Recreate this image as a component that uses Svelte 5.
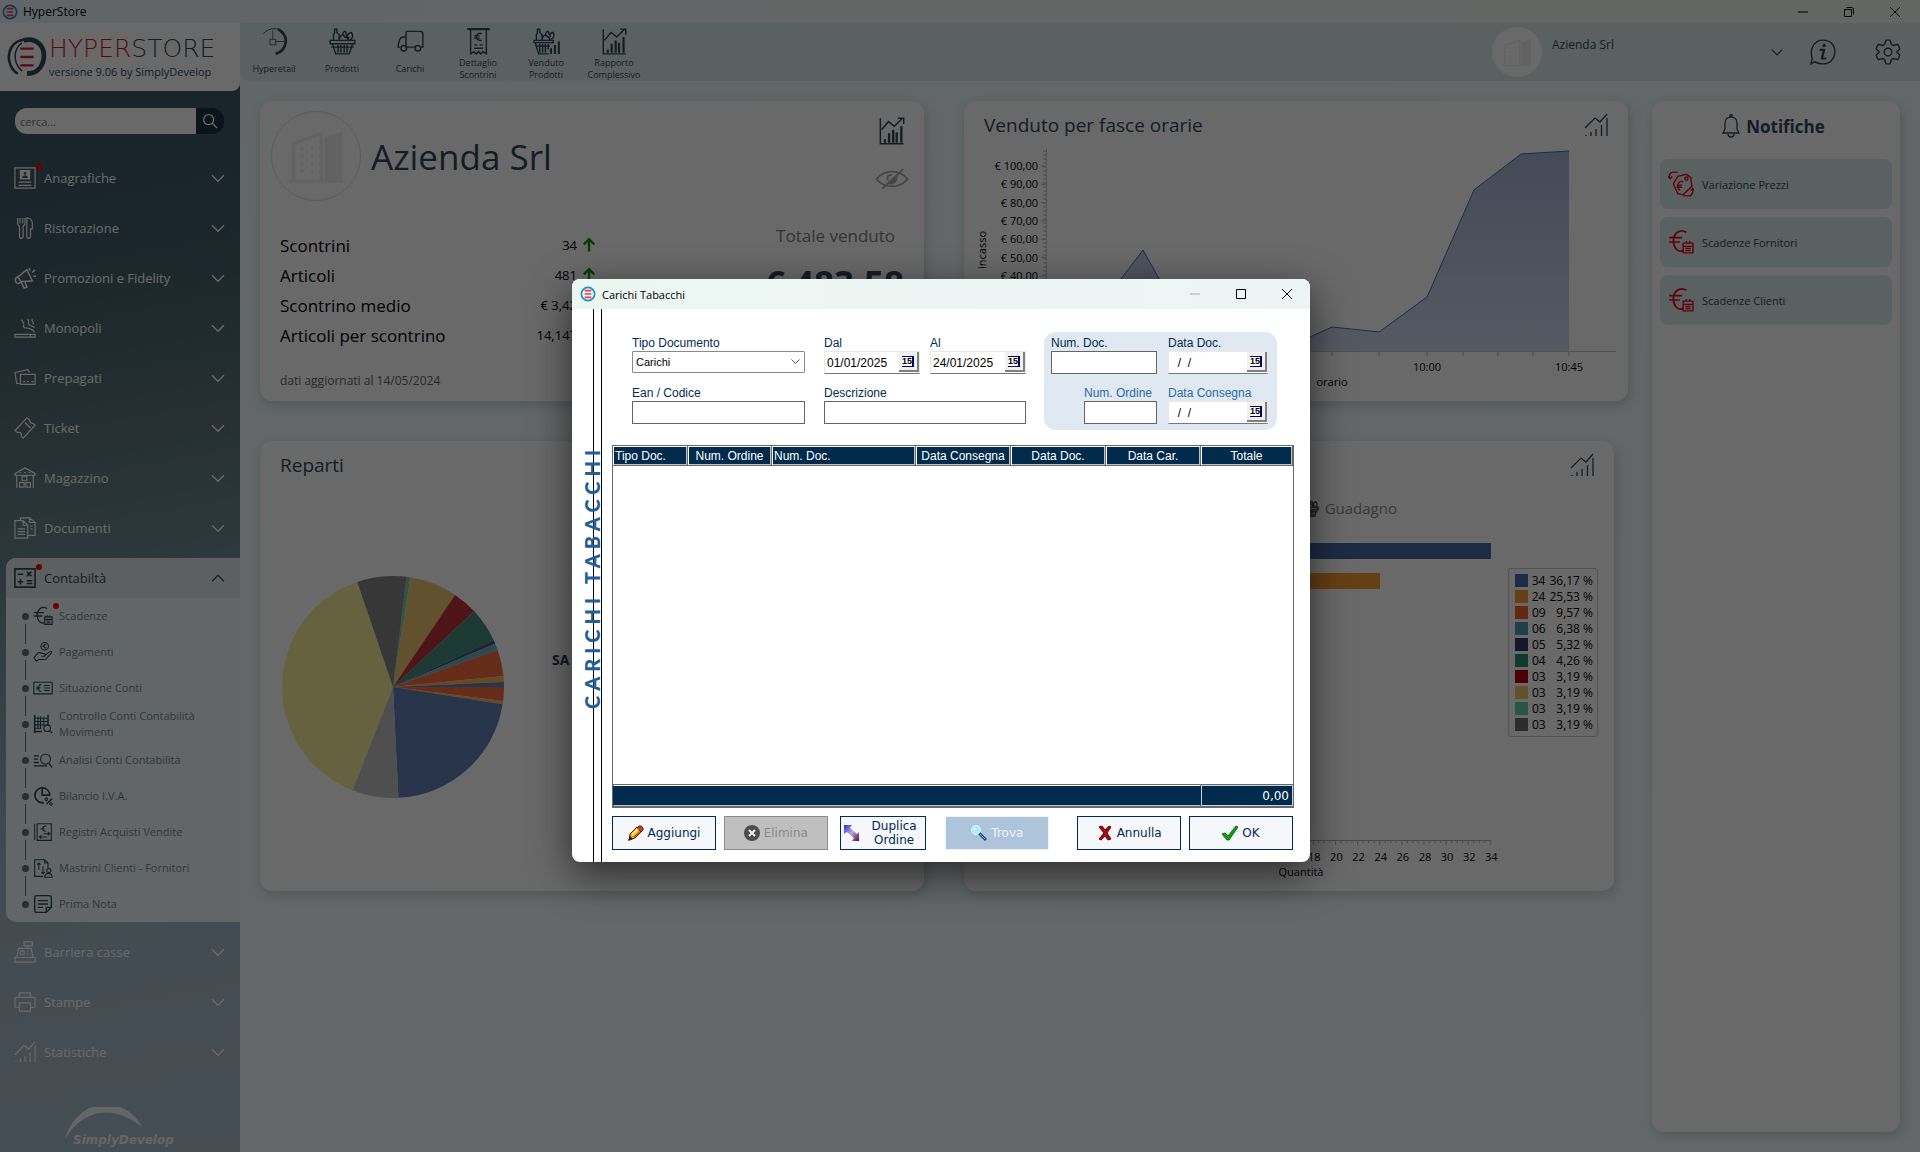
<script>
  const icons = {
    ring: `<path d="M11 1.500C3 2 0 9 1.500 15c1 4 3 6 5 7" stroke="#2f4a57" stroke-width="1.600"/><path d="M9 3.500C4 7 3 15 9 20.500" stroke="#2f4a57" stroke-width=".9"/><path d="M10 2c8-2 13 4 12 11-1 6-5 9-10 9" stroke="#2f4a57" stroke-width="2.800"/><path d="M8 7h8M8 12h8M8 17h8" stroke="#e0142c" stroke-width="1.400"/>`,
    appMark: `<circle cx="12" cy="12" r="10" stroke="#1f8fc8" stroke-width="2.600"/><path d="M7 7h10M7 12h10M7 17h10" stroke="#e8404f" stroke-width="2.600"/>`,
    search: `<circle cx="10" cy="10" r="7.500"/><path d="M15.500 15.500l7 7"/>`,
    down: `<path d="M3 8l9 9 9-9"/>`,
    up: `<path d="M3 17l9-9 9 9"/>`,
    anagrafiche: `<path d="M1 1h22v22H1z"/><path d="M7 4h10v9H7z" fill="currentColor"/><circle cx="12" cy="7" r="1.500" fill="#3f5a64" stroke="none"/><path d="M9 12c0-4 6-4 6 0z" fill="#3f5a64" stroke="none"/><path d="M5 16.500h14M5 20h14"/>`,
    ristorazione: `<path d="M4 1v6c0 2 1 2 2 3v11c0 3 4 3 4 0V10c1-1 2-1 2-3V1M6.500 1v6M9.500 1v6M14 1v20c0 3 4 3 4 0v-8h2V7c0-4-3-6-6-6z"/>`,
    promozioni: `<path d="M4 11L14 3l6 12-12 1zM4 11c-4 1-3 7 1 7l3-2M8 17l3 6 3-1-2-6M17 4V1M20 6l3-3M21 10h3" stroke-width="1.600"/>`,
    monopoli: `<path d="M1 19h22v3H1zM18 19v3M22 17c0-3-2-3-4-4s-3-1-5-1-4-2-2-4M22 12c-1-3-5-2-6-4s1-3-1-6M8 3c2 2 1 3 3 4M21 8c1-3-3-3-1-6"/>`,
    prepagati: `<path d="M7 8h16v11H7zM1 6l14-3 2 3M1 6l2 12h3M10 16h2M14 16h2M19 16h2"/>`,
    ticket: `<path d="M1 15L14 1l3 2c0 2 1 4 4 4l2 2L10 23l-2-2c1-3-1-5-4-4zM12 6l6 6"/>`,
    magazzino: `<path d="M1 7l11-6 11 6v2H1zM3 9v14M21 9v14M9 10h5v5H9zM6 17h5v5H6zM13 17h5v5h-5zM6 6h2M11 6h2M16 6h2"/>`,
    documenti: `<path d="M1 4h9l5 5v14H1zM10 4v5h5M7 4V1h10l6 5v14h-8M17 1v5h6M4 13h8M4 16h8M4 19h8M18 10h2M18 13h2"/>`,
    contabilita: `<path d="M1 2h22v20H1z" stroke-width="1.800"/><path d="M4 8h6M14 5l5 5M19 5l-5 5M7 13v6M4 16h6M14 15h6M14 18h6" stroke-width="1.700"/>`,
    cassa: `<path d="M1 18h22v5H1zM3 18L5 8h14l2 10M11 1h9v4h-9zM15 5v3M7 11h4v4H7zM14 11h2M18 11h1M14 14h2M18 14h1"/>`,
    stampe: `<path d="M6 7V2h12v5M6 18H3c-2 0-2-1-2-2V9c0-2 1-2 2-2h18c2 0 2 1 2 2v7c0 2-1 2-2 2h-3M6 13h12v9H6z"/>`,
    trend: `<path d="M1 15L11 5l5 4 7-8M2 23v-1M7 23v-4M12 23v-7M17.500 23V12M23 23V5"/>`,
    report: `<path d="M2 1v22h20M3 11l6-7 5 4 7-7M17 1h5v5"/><path d="M6 22v-3M9.500 22v-8M13 22V11M16 22v-9M20 22V8" stroke-width="2"/>`,
    euroCal: `<path d="M17 3C10-1 5 5 5 11s4 11 9 9M1 8h12M1 12h10" stroke-width="1.600"/><path d="M14 13h9v9h-9zM14 16h9M17 11v2M20 11v2M16 18h5M16 20h5"/>`,
    pagamenti: `<circle cx="14" cy="5" r="4.500"/><path d="M16 3c-4-1-4 5 0 4M11 5h3M1 19l5-6c3-1 5 1 8 1 2 1 1 3-1 3h-3M14 16l7-5c2 0 2 1 1 2l-7 8H7l-3 2-3-4"/>`,
    conti: `<path d="M1 5h22v14H1z"/><path d="M10 8c-5-1-5 9 0 8M4 11h5M4 13h4M13 9h7M13 12h7M13 15h7"/>`,
    controllo: `<path d="M2 1v22M18 1v13M1 21h10" stroke-width="1.800"/><path d="M2 5h16M2 9h16M2 13h12M2 17h8M6 3v15M9 3v15M13 3v10"/><circle cx="17" cy="17" r="4"/><path d="M20 20l3 3"/>`,
    analisi: `<circle cx="15" cy="11" r="6"/><path d="M19 16l4 5M1 7h6M1 11h5M1 15h6M1 19h16" stroke-width="1.600"/>`,
    bilancio: `<path d="M13 20a9 9 0 1 1 7-11v3M11 1v10h9" stroke-width="2"/><path d="M16 22l7-7" stroke-width="1.600"/><circle cx="16" cy="16" r="1.500"/><circle cx="21.500" cy="21.500" r="1.500"/>`,
    registri: `<path d="M2 2v20M5 2h17v20H5z"/><path d="M16 5c-6-1-6 7 0 6M9 8h5M20 14h-7M18 12l2 2-2 2M8 18h9M10 16l-2 2 2 2"/>`,
    mastrini: `<path d="M12 22H2V2h12l4 4v6M14 2v4h4M7 14V6M5 8l2-2 2 2M12 10v9M10 17l2 2 2-2"/><circle cx="19" cy="15" r="2.500"/><path d="M14 23c0-6 9-6 9 0z"/>`,
    nota: `<path d="M2 4c0-2 1-2 3-2h14c2 0 3 0 3 2v12l-6 6H5c-2 0-3 0-3-2zM22 16h-6v6M6 8h12M6 12h12M6 16h6" stroke-width="1.600"/>`,
    hyperetail: `<path d="M2 5C8-1 15 0 18 3" stroke-width=".8"/><path d="M15 1c11 6 8 19-2 22" stroke-width="2.400"/><path d="M8 10h5v5H8zM10.500 2v8M13 12h8" stroke-width=".7"/>`,
    basket: `<path d="M1 11h22v3H1zM2 17h20M3 14l3 9h12l3-9M8 15v7M10.500 15v7M13.500 15v7M16 15v7M4 11V6l1-2V1h2v3l2 2v5M9 10c1-4 4-5 5-2 2 0 3 1 3 3M12 6c1-3 2-4 3-2 0 3 1 4 3 5M18 11c3-1 4-4 2-7-2 0-4 2-4 4"/>`,
    truck: `<path d="M8 3h13c2 0 2 1 2 2v12h-2M8 3v14M8 8H5c-2 0-4 4-4 9h2M8 17h8"/><circle cx="6" cy="18" r="2.500"/><circle cx="18.500" cy="18" r="2.500"/>`,
    receipt: `<path d="M2 1h20" stroke-width="2"/><path d="M5 1v22l3-2 2 2 2-2 2 2 2-2 3 2V1M8 15h3M13 15h3M8 18h8"/><path d="M15 5c-6-2-7 7 0 6M8 7h5M8 9h5"/>`,
    basketBars: `<path d="M1 11h17v2H1zM2 16h13M2 13l3 10h9M6 14v8M8.500 14v8M11 14v8M13.500 14v5M3 11V6l1-2V1h2v3l2 2v5M8 10c1-4 4-5 5-2 1 0 2 1 2 3M11 6c1-3 2-4 3-2 0 2 1 3 2 4M16 10c3-1 3-4 2-6-2 0-3 1-3 3"/><path d="M16 23v-5M19.500 23v-8M23 23V12" stroke-width="1.800"/>`,
    info: `<path d="M4 21l-3 2 1-5C-1 8 5 1 12 1s11 5 11 11-5 11-11 11c-3 0-6-1-8-2z"/><path d="M9 10h4l-2 8h4" stroke-width="2"/><circle cx="13" cy="6" r="1" fill="currentColor"/>`,
    gear: `<path d="M10 1h4l1 4 2 1 4-1 2 4-3 3 3 3-2 4-4-1-2 1-1 4h-4l-1-4-2-1-4 1-2-4 3-3-3-3 2-4 4 1 2-1z" stroke-linejoin="round"/><circle cx="12" cy="12" r="3.500"/>`,
    bell: `<path d="M4 19h16l-2-4V9c0-8-12-8-12 0v6zM9 20c0 4 6 4 6 0M11 3V1h2v2"/>`,
    prezzi: `<path d="M9 5l8-2 4 3 1 8-8 8-5-1-4-9zM5 1C2 1 1 3 1 7M0 5l2 2 2-2M9 1H5M19 23c3 0 4-2 4-6M21 18l2-2 1 2M19 23h-5"/><circle cx="17" cy="7" r="1.500"/><path d="M14 10c-4-2-7 4-3 8M8 13h5M8 15h5"/>`,
    eye: `<path d="M1 12c6-7 16-7 22 0-6 7-16 7-22 0z"/><path d="M10 15l5-5c1 3-2 6-5 5z" fill="currentColor"/><path d="M9 13c-1-3 1-4 3-4M5 19L20 5"/>`,
    building: `<path d="M3 22V7l11-4v19M1 22h14"/><path d="M16 5l6-2v19h-6z" fill="currentColor"/><path d="M6 9h1M10 9h1M6 12h1M10 12h1M6 15h1M10 15h1M6 18h1M10 18h1"/>`,
    arrow: `<path d="M12 23V3M3 11l9-9 9 9"/>`,
  };

  const tools = [
    { label: ["Hyperetail"], icon: "hyperetail" },
    { label: ["Prodotti"], icon: "basket" },
    { label: ["Carichi"], icon: "truck" },
    { label: ["Dettaglio", "Scontrini"], icon: "receipt" },
    { label: ["Venduto", "Prodotti"], icon: "basketBars" },
    { label: ["Rapporto", "Complessivo"], icon: "report" },
  ];

  const menuTop = [
    { label: "Anagrafiche", icon: "anagrafiche", alert: true },
    { label: "Ristorazione", icon: "ristorazione" },
    { label: "Promozioni e Fidelity", icon: "promozioni" },
    { label: "Monopoli", icon: "monopoli" },
    { label: "Prepagati", icon: "prepagati" },
    { label: "Ticket", icon: "ticket" },
    { label: "Magazzino", icon: "magazzino" },
    { label: "Documenti", icon: "documenti" },
  ];

  const subMenu = [
    { label: "Scadenze", icon: "euroCal", alert: true },
    { label: "Pagamenti", icon: "pagamenti" },
    { label: "Situazione Conti", icon: "conti" },
    { label: "Controllo Conti Contabilità Movimenti", icon: "controllo" },
    { label: "Analisi Conti Contabilità", icon: "analisi" },
    { label: "Bilancio I.V.A.", icon: "bilancio" },
    { label: "Registri Acquisti Vendite", icon: "registri" },
    { label: "Mastrini Clienti - Fornitori", icon: "mastrini" },
    { label: "Prima Nota", icon: "nota" },
  ];

  const menuBottom = [
    { label: "Barriera casse", icon: "cassa" },
    { label: "Stampe", icon: "stampe" },
    { label: "Statistiche", icon: "trend" },
  ];

  const stats = [
    { label: "Scontrini", value: "34" },
    { label: "Articoli", value: "481" },
    { label: "Scontrino medio", value: "€ 3,42" },
    { label: "Articoli per scontrino", value: "14,147" },
  ];

  // clockwise from the top, start angle in degrees
  const slices = [
    [7, "#70cab0"],
    [9, "#edc673"],
    [34, "#be313b"],
    [47, "#448d7c"],
    [65, "#42588b"],
    [67, "#6bb0c3"],
    [70.5, "#f66b3d"],
    [84.3, "#f9b25d"],
    [87.4, "#5f7fb4"],
    [90, "#f66b3d"],
    [97.2, "#f9b25d"],
    [99, "#5f7fb4"],
    [177.2, "#c1c1c1"],
    [201.5, "#f7ef9a"],
    [341.2, "#868686"],
    [367, ""],
  ];

  function point(deg) {
    const a = (deg * Math.PI) / 180;
    return `${111 + 111 * Math.sin(a)} ${111 - 111 * Math.cos(a)}`;
  }

  const pie = slices.slice(0, -1).map(([start, color], i) => {
    const end = slices[i + 1][0];
    return { color, d: `M111 111L${point(start)}A111 111 0 ${end - start > 180 ? 1 : 0} 1 ${point(end)}Z` };
  });

  const money = [100, 90, 80, 70, 60, 50, 40, 30, 20, 10];
  const line = "86,200 108,188 153,143 179,109 198,143 240,206 300,202 346,196 368,186 415,191 463,156 510,49 557,13 605,10";
  const fineTicks = Array.from({ length: 50 }, (_, i) => 10 + i * 4);

  const legend = [
    ["#4969a6", "34", "36,17 %"],
    ["#f99a31", "24", "25,53 %"],
    ["#fb5d27", "09", "9,57 %"],
    ["#4e9ab0", "06", "6,38 %"],
    ["#2c3d6e", "05", "5,32 %"],
    ["#278d70", "04", "4,26 %"],
    ["#b9000a", "03", "3,19 %"],
    ["#f1c35d", "03", "3,19 %"],
    ["#62cfab", "03", "3,19 %"],
    ["#6b6b6b", "03", "3,19 %"],
  ];
  const quantities = Array.from({ length: 18 }, (_, i) => i * 2);

  const notices = [
    { label: "Variazione Prezzi", icon: "prezzi" },
    { label: "Scadenze Fornitori", icon: "euroCal" },
    { label: "Scadenze Clienti", icon: "euroCal" },
  ];

  let search = "";
  let form = { tipo: "Carichi", dal: "01/01/2025", al: "24/01/2025", ean: "", descrizione: "", numDoc: "", dataDoc: "  /  /", numOrdine: "", dataConsegna: "  /  /" };
</script>

{#snippet icon(name, cls = "")}
  <svg class="icon {cls}" viewBox="0 0 24 24" aria-hidden="true">{@html icons[name]}</svg>
{/snippet}

{#snippet menuItem(item)}
  <button type="button" class="menu-item">
    <span class="menu-icon">
      {@render icon(item.icon)}
      {#if item.alert}<i class="alert"></i>{/if}
    </span>
    <span class="menu-label">{item.label}</span>
    {@render icon("down", "chevron")}
  </button>
{/snippet}

{#snippet calendar(name)}
  <button type="button" class="calendar" aria-label={name}><span>15</span></button>
{/snippet}

<div class="app">
  <header class="titlebar">
    {@render icon("appMark", "app-mark")}
    <span>HyperStore</span>
    <div class="window-btns">
      <button type="button" aria-label="Riduci"><svg viewBox="0 0 12 12"><path d="M1 6h10" /></svg></button>
      <button type="button" aria-label="Ripristina"><svg viewBox="0 0 12 12"><path d="M1.500 3.500h7v7h-7zM3.500 1.500h5q2 0 2 2v5" /></svg></button>
      <button type="button" aria-label="Chiudi"><svg viewBox="0 0 12 12"><path d="M1 1l10 10M11 1L1 11" /></svg></button>
    </div>
  </header>

  <div class="body">
    <aside class="sidebar">
      <div class="brand">
        {@render icon("ring", "brand-ring")}
        <div class="brand-text">
          <div class="brand-name"><span class="red">HYPER</span><span>STORE</span></div>
          <div class="brand-version">versione 9.06 by SimplyDevelop</div>
        </div>
      </div>

      <div class="search">
        <input type="text" placeholder="cerca..." aria-label="cerca" bind:value={search} />
        <button type="button" aria-label="Cerca">{@render icon("search")}</button>
      </div>

      <nav>
        {#each menuTop as item}
          {@render menuItem(item)}
        {/each}
        <div class="open-group">
          <button type="button" class="menu-item open">
            <span class="menu-icon">{@render icon("contabilita")}<i class="alert"></i></span>
            <span class="menu-label">Contabiltà</span>
            {@render icon("up", "chevron")}
          </button>
          <ul>
            {#each subMenu as item}
              <li>
                <a href="#voce">
                  <span class="sub-icon">
                    {@render icon(item.icon)}
                    {#if item.alert}<i class="alert"></i>{/if}
                  </span>
                  <span>{item.label}</span>
                </a>
              </li>
            {/each}
          </ul>
        </div>
        {#each menuBottom as item}
          {@render menuItem(item)}
        {/each}
      </nav>

      <div class="maker">
        <svg viewBox="0 0 110 32" aria-hidden="true"><path d="M1 32C14-12 62-12 78 20 52-2 20 0 1 32z" fill="currentColor" /></svg>
        <span>SimplyDevelop</span>
      </div>
    </aside>

    <div class="content">
      <div class="toolbar">
        {#each tools as tool}
          <button type="button" class="tool">
            {@render icon(tool.icon)}
            <span class="tool-label">{#each tool.label as row}<span>{row}</span>{/each}</span>
          </button>
        {/each}
        <div class="account">
          <span class="avatar small">{@render icon("building")}</span>
          <span class="account-name">Azienda Srl</span>
          {@render icon("down", "account-chevron")}
          <button type="button" aria-label="Informazioni">{@render icon("info")}</button>
          <button type="button" aria-label="Impostazioni">{@render icon("gear")}</button>
        </div>
      </div>

      <main>
        <div class="cards">
          <section class="card company">
            <div class="company-head">
              <span class="avatar">{@render icon("building")}</span>
              <h1>Azienda Srl</h1>
              <div class="company-icons">
                {@render icon("report")}
                {@render icon("eye", "eye")}
              </div>
            </div>
            <div class="company-body">
              <dl>
                {#each stats as stat}
                  <div class="stat">
                    <dt>{stat.label}</dt>
                    <dd>{stat.value}</dd>
                    {@render icon("arrow", "rise")}
                  </div>
                {/each}
              </dl>
              <div class="total">
                <div class="total-label">Totale venduto</div>
                <div class="total-value">€ 483,58</div>
              </div>
            </div>
            <div class="updated">dati aggiornati al 14/05/2024</div>
          </section>

          <section class="card">
            <div class="card-head">
              <h2>Venduto per fasce orarie</h2>
              {@render icon("trend")}
            </div>
            <svg class="chart" viewBox="0 0 664 260">
              <defs>
                <linearGradient id="fill" x1="0" y1="0" x2="0" y2="1">
                  <stop offset="0" stop-color="#a4b4d6" />
                  <stop offset="1" stop-color="#d0d8ee" />
                </linearGradient>
              </defs>
              <polygon points="86,210 {line} 605,210" fill="url(#fill)" />
              <polyline points={line} fill="none" stroke="#4a69a8" />
              {#each fineTicks as y}
                <path d="M79 {y}h4" stroke="#b5b5b5" />
              {/each}
              {#each money as value, i}
                <text x="74" y={29 + i * 18.3} text-anchor="end">€ {value},00</text>
                <path d="M77 {25 + i * 18.3}h6" stroke="#b5b5b5" />
              {/each}
              <path d="M82.500 8v202M82 210.500h570" stroke="#c4c4c4" fill="none" />
              {#each [368, 415, 463, 499, 534, 569, 605] as x}
                <path d="M{x} 211v4" stroke="#b5b5b5" />
              {/each}
              <text x="463" y="230" text-anchor="middle">10:00</text>
              <text x="605" y="230" text-anchor="middle">10:45</text>
              <text x="368" y="245" text-anchor="middle">orario</text>
              <text transform="translate(22 109) rotate(-90)" text-anchor="middle">incasso</text>
            </svg>
          </section>

          <section class="card">
            <div class="card-head"><h2>Reparti</h2></div>
            <div class="pie-row">
              <svg class="pie" viewBox="0 0 222 222">
                {#each pie as slice}
                  <path d={slice.d} fill={slice.color} />
                {/each}
              </svg>
              <span class="pie-name">SA</span>
            </div>
          </section>

          <section class="card last">
            <div class="card-head">
              <span></span>
              {@render icon("trend")}
            </div>
            <div class="tabs">
              <button type="button">{@render icon("basket")}Guadagno</button>
            </div>
            <div class="bars-row">
              <svg class="bars" viewBox="0 0 536 366">
                <rect x="150" y="18" width="377" height="16" fill="#4969a6" />
                <rect x="150" y="48" width="266" height="16" fill="#f99a31" />
                <path d="M150 315.500h377" stroke="#b5b5b5" />
                {#each quantities as q}
                  <path d="M{150 + q * 11.07} 315v5" stroke="#b5b5b5" />
                  {#if q < 34}
                    <path d="M{155.500 + q * 11.07} 315v3M{161 + q * 11.07} 315v3M{166.500 + q * 11.07} 315v3" stroke="#b5b5b5" />
                  {/if}
                  <text x={151 + q * 11.07} y="336" text-anchor="middle">{q}</text>
                {/each}
                <text x="337" y="351" text-anchor="middle">Quantità</text>
              </svg>
              <ul class="legend">
                {#each legend as [color, count, share]}
                  <li><i style="background: {color}"></i><span>{count}</span><span class="share">{share}</span></li>
                {/each}
              </ul>
            </div>
          </section>
        </div>

        <section class="card notices">
          <h3>{@render icon("bell")}Notifiche</h3>
          {#each notices as notice}
            <button type="button" class="notice">{@render icon(notice.icon)}{notice.label}</button>
          {/each}
        </section>
      </main>
    </div>
  </div>

  <div class="scrim"></div>

  <div class="dialog" role="dialog" aria-labelledby="dialog-title">
    <header class="dialog-bar">
      {@render icon("appMark", "app-mark")}
      <span id="dialog-title">Carichi Tabacchi</span>
      <div class="window-btns">
        <button type="button" aria-label="Riduci" disabled><svg viewBox="0 0 12 12"><path d="M1 6h10" /></svg></button>
        <button type="button" aria-label="Ingrandisci"><svg viewBox="0 0 12 12"><path d="M1.500 1.500h9v9h-9z" /></svg></button>
        <button type="button" aria-label="Chiudi"><svg viewBox="0 0 12 12"><path d="M1 1l10 10M11 1L1 11" /></svg></button>
      </div>
    </header>
    <div class="dialog-body">
      <div class="rail"><span>CARICHI TABACCHI</span></div>
      <div class="pane">
        <form class="filters">
          <div class="plain">
            <div class="field">
              <label for="tipo">Tipo Documento</label>
              <select id="tipo" bind:value={form.tipo}><option>Carichi</option></select>
            </div>
            <div class="dates">
              <div class="field">
                <label for="dal">Dal</label>
                <div class="date"><input id="dal" type="text" bind:value={form.dal} />{@render calendar("Scegli Dal")}</div>
              </div>
              <div class="field">
                <label for="al">Al</label>
                <div class="date"><input id="al" type="text" bind:value={form.al} />{@render calendar("Scegli Al")}</div>
              </div>
            </div>
            <div class="field">
              <label for="ean">Ean / Codice</label>
              <input id="ean" class="box" type="text" bind:value={form.ean} />
            </div>
            <div class="field">
              <label for="descrizione">Descrizione</label>
              <input id="descrizione" class="box" type="text" bind:value={form.descrizione} />
            </div>
          </div>
          <div class="group">
            <div class="field">
              <label for="num-doc">Num. Doc.</label>
              <input id="num-doc" class="box" type="text" bind:value={form.numDoc} />
            </div>
            <div class="field">
              <label for="data-doc">Data Doc.</label>
              <div class="date"><input id="data-doc" type="text" bind:value={form.dataDoc} />{@render calendar("Scegli Data Doc.")}</div>
            </div>
            <div class="field order">
              <label for="num-ordine">Num. Ordine</label>
              <input id="num-ordine" class="box" type="text" bind:value={form.numOrdine} />
            </div>
            <div class="field order-date">
              <label for="data-consegna">Data Consegna</label>
              <div class="date"><input id="data-consegna" type="text" bind:value={form.dataConsegna} />{@render calendar("Scegli Data Consegna")}</div>
            </div>
          </div>
        </form>

        <table>
          <colgroup>
            <col class="c-tipo" /><col class="c-ordine" /><col class="c-doc" /><col class="c-data" /><col class="c-data" /><col class="c-data" /><col class="c-tot" />
          </colgroup>
          <thead>
            <tr>
              <th class="left">Tipo Doc.</th>
              <th>Num. Ordine</th>
              <th class="left">Num. Doc.</th>
              <th>Data Consegna</th>
              <th>Data Doc.</th>
              <th>Data Car.</th>
              <th>Totale</th>
            </tr>
          </thead>
          <tbody>
            <tr><td colspan="7"></td></tr>
          </tbody>
          <tfoot>
            <tr><td colspan="6"></td><td class="sum">0,00</td></tr>
          </tfoot>
        </table>

        <div class="actions">
          <button type="button" class="action">
            <svg viewBox="0 0 16 16"><path d="M1 15l1-6 7-7 5 4-7 7z" fill="#f6a619" stroke="#3d2500" /><path d="M9 3l2-2h2l2 2v2l-2 2z" fill="#d83a2a" stroke="#511" /><path d="M4 10l6-6" stroke="#fff08a" stroke-width="2" /><path d="M6 12l6-5" stroke="#b45a10" stroke-width="1.500" /><path d="M0 16l2-5 3 3z" fill="#222" /></svg>
            Aggiungi
          </button>
          <button type="button" class="action off" disabled>
            <svg viewBox="0 0 16 16"><circle cx="8" cy="8" r="8" fill="#4d4d4d" /><path d="M5 5l6 6M11 5l-6 6" stroke="#eee" stroke-width="2" /></svg>
            Elimina
          </button>
          <button type="button" class="action duplicate">
            <svg viewBox="0 0 16 16"><defs><linearGradient id="dup" x1="0" y1="0" x2="1" y2="1"><stop offset="0" stop-color="#2a2ae0" /><stop offset=".5" stop-color="#b9a9d8" /><stop offset="1" stop-color="#500850" /></linearGradient></defs><path d="M0 0h8L6 3l7 6 2-2v9H8l2-3-7-6-3 2z" fill="url(#dup)" /></svg>
            <span>Duplica<br />Ordine</span>
          </button>
          <button type="button" class="action find" disabled>
            <svg viewBox="0 0 16 16"><path d="M8 8l7 7" stroke="#1c4d7c" stroke-width="3" /><path d="M9 9l5 5" stroke="#49b5ee" /><circle cx="5" cy="5" r="4.500" fill="#a9eefa" stroke="#e8f4fa" /><path d="M3 5q0-2 2-2" stroke="#fff" fill="none" /></svg>
            Trova
          </button>
          <button type="button" class="action cancel">
            <svg viewBox="0 0 16 16"><path d="M2 2l3-1 3 4 4-4 2 1-4 6 4 6-3 1-3-4-4 4-2-1 5-6z" fill="#a80c0c" stroke="#6d0000" /></svg>
            Annulla
          </button>
          <button type="button" class="action">
            <svg viewBox="0 0 16 16"><path d="M0 9l3-1 3 3 8-10 2 1L7 15H5z" fill="#12a012" stroke="#0a6a0a" /></svg>
            OK
          </button>
        </div>
      </div>
    </div>
  </div>
</div>

<style>
  :global(body) {
    background: #f0f8fb;
  }

  .app {
    position: relative;
    display: flex;
    flex-direction: column;
    min-height: 100vh;
    font-family: "Open Sans", "Noto Sans", sans-serif;
    font-size: 12px;
    color: #2f4a57;
    background: linear-gradient(160deg, #eef8fb, #f4fbfc);
  }

  button {
    padding: 0;
    border: 0;
    background: none;
    color: inherit;
    font: inherit;
    text-align: left;
  }

  input,
  select {
    font: inherit;
    box-sizing: border-box;
  }

  ul,
  dl,
  dd,
  h1,
  h2,
  h3 {
    margin: 0;
    padding: 0;
    list-style: none;
    font-weight: 400;
  }

  .icon {
    display: block;
    width: 24px;
    height: 24px;
    flex: none;
    fill: none;
    stroke: currentColor;
    stroke-width: 1.3;
  }

  .titlebar {
    display: flex;
    align-items: center;
    gap: 5px;
    height: 23px;
    padding-left: 2px;
    color: #000;
    background: linear-gradient(90deg, #eff6fb, #f1f8f3 70%, #f0f7ec);
  }

  .icon.app-mark {
    width: 16px;
    height: 16px;
  }

  .window-btns {
    display: flex;
    margin-left: auto;
  }

  .window-btns button {
    display: flex;
    justify-content: center;
    width: 46px;
  }

  .window-btns svg {
    width: 12px;
    height: 12px;
    fill: none;
    stroke: #000;
  }

  .window-btns button:disabled {
    opacity: 0.3;
  }

  .titlebar .window-btns {
    padding-right: 2px;
  }

  .body {
    display: flex;
    flex: 1;
  }

  .sidebar {
    display: flex;
    flex-direction: column;
    flex: none;
    width: 240px;
    color: #fff;
    background: linear-gradient(170deg, #3d5a66 0%, #3f5c68 20%, #5a737f 36%, #6e8995 48%, #a0b6c4 72%, #aabdcd 100%);
  }

  .brand {
    display: flex;
    align-items: center;
    gap: 2px;
    height: 68px;
    padding-left: 7px;
    border-radius: 0 0 8px 0;
    background: #fff;
    color: #2f4a57;
  }

  .icon.brand-ring {
    width: 40px;
    height: 40px;
  }

  .brand-name {
    font: 200 25px/30px "DejaVu Sans", sans-serif;
  }

  .red {
    color: #e0142c;
  }

  .brand-version {
    line-height: 16px;
    font-size: 11px;
  }

  .search {
    display: flex;
    height: 26px;
    margin: 17px 16px 19px 15px;
  }

  .search input {
    flex: 1;
    min-width: 0;
    padding: 0 5px;
    border: 0;
    border-radius: 12px 0 0 12px;
    background: #fff;
    font-size: 11px;
  }

  .search button {
    display: flex;
    align-items: center;
    justify-content: center;
    width: 28px;
    border-radius: 0 12px 12px 0;
    background: #173440;
  }

  .search .icon {
    width: 16px;
    height: 16px;
    stroke-width: 2;
  }

  .menu-item {
    display: flex;
    align-items: center;
    width: 100%;
    height: 50px;
    padding: 0 14px;
    font-size: 13px;
  }

  .menu-icon,
  .sub-icon {
    position: relative;
    flex: none;
  }

  .menu-icon .icon {
    width: 22px;
    height: 22px;
  }

  .menu-label {
    flex: 1;
    padding-left: 8px;
  }

  .icon.chevron {
    width: 16px;
    height: 16px;
    stroke-width: 2;
  }

  .alert {
    position: absolute;
    top: -3px;
    right: -6px;
    width: 6px;
    height: 6px;
    border-radius: 50%;
    background: #f00;
  }

  .open-group {
    margin: 5px 0 5px 6px;
    border-radius: 10px 0 0 10px;
    overflow: hidden;
    color: #2f4a57;
    background: #f0f7f7;
  }

  .menu-item.open {
    height: 40px;
    padding: 0 14px 0 8px;
    background: #e2e8e9;
  }

  .open-group li {
    position: relative;
  }

  .open-group a {
    display: flex;
    align-items: center;
    gap: 6px;
    height: 36px;
    padding: 0 36px 0 16px;
    color: #75878f;
    font-size: 11px;
    line-height: 16px;
    text-decoration: none;
  }

  .open-group a::before {
    content: "";
    flex: none;
    width: 7px;
    height: 7px;
    border-radius: 50%;
    background: #5b707a;
  }

  .open-group li:not(:last-child)::after {
    content: "";
    position: absolute;
    left: 19px;
    top: 26px;
    width: 1px;
    height: 20px;
    background: #5b707a;
  }

  .sub-icon {
    margin-left: -2px;
    color: #2f4a57;
  }

  .sub-icon .icon {
    width: 20px;
    height: 20px;
  }

  .maker {
    display: flex;
    flex-direction: column;
    margin: auto 0 2px 64px;
    color: #f4f6f8;
  }

  .maker svg {
    width: 110px;
    height: 32px;
  }

  .maker span {
    margin-top: -9px;
    padding-left: 9px;
    font: italic bold 12px/20px "DejaVu Sans", sans-serif;
  }

  .content {
    display: flex;
    flex-direction: column;
    flex: 1;
    min-width: 0;
  }

  .toolbar {
    display: flex;
    height: 58px;
    border-radius: 0 0 0 8px;
    background: #deecec;
  }

  .tool {
    display: flex;
    flex-direction: column;
    align-items: center;
    gap: 1px;
    width: 68px;
    padding-top: 5px;
    font-size: 9px;
    line-height: 12px;
  }

  .tool .icon {
    width: 27px;
    height: 27px;
  }

  .tool-label {
    display: flex;
    flex: 1;
    flex-direction: column;
    justify-content: center;
    align-items: center;
  }

  .account {
    display: flex;
    align-items: center;
    margin-left: auto;
    padding-right: 19px;
  }

  .account .icon {
    width: 26px;
    height: 26px;
  }

  .account button {
    margin-left: 39px;
  }

  .account .account-chevron {
    width: 14px;
    height: 14px;
    stroke-width: 2;
    margin-right: -13px;
  }

  .account-name {
    width: 218px;
    padding-left: 10px;
    padding-bottom: 16px;
  }

  .avatar {
    display: flex;
    align-items: center;
    justify-content: center;
    box-sizing: border-box;
    width: 90px;
    height: 90px;
    border: 1px solid #dcdcdc;
    border-radius: 50%;
    background: #fff;
    color: #efefef;
  }

  .avatar .icon {
    width: 60px;
    height: 60px;
  }

  .avatar.small {
    width: 50px;
    height: 50px;
    border: 0;
  }

  .avatar.small .icon {
    width: 32px;
    height: 32px;
  }

  main {
    display: flex;
    flex: 1;
    gap: 24px;
    padding: 20px;
  }

  .cards {
    display: grid;
    flex: 1;
    grid-template-columns: 1fr 1fr;
    grid-template-rows: 300px 450px;
    gap: 40px;
  }

  .card {
    display: flex;
    flex-direction: column;
    min-width: 0;
    border-radius: 12px;
    background: #fff;
    box-shadow: 2px 4px 12px rgba(60, 90, 100, 0.25);
  }

  .card.last {
    margin-right: 14px;
  }

  .company-head {
    display: flex;
    align-items: center;
    gap: 10px;
    padding: 10px 14px 0 11px;
  }

  h1 {
    flex: 1;
    padding-top: 2px;
    font-size: 35px;
    line-height: 50px;
  }

  .company-icons {
    display: flex;
    flex-direction: column;
    align-items: center;
    gap: 16px;
  }

  .company-icons .icon {
    width: 28px;
    height: 30px;
  }

  .company-icons .eye {
    width: 36px;
    height: 34px;
    color: #a8a8a8;
  }

  .company-body {
    display: flex;
    justify-content: space-between;
    padding: 22px 20px 0;
  }

  dl {
    width: 316px;
    padding-top: 7px;
    color: #000;
  }

  .stat {
    display: flex;
    align-items: center;
    gap: 5px;
    height: 30px;
  }

  dt {
    flex: 1;
    font-size: 17px;
  }

  dd {
    font-size: 13px;
  }

  .icon.rise {
    width: 14px;
    height: 16px;
    color: #009a00;
    stroke-width: 4;
  }

  .total {
    text-align: right;
  }

  .total-label {
    padding: 0 9px 0 0;
    font-size: 17px;
    line-height: 26px;
    color: #808080;
  }

  .total-value {
    padding-top: 10px;
    font-size: 35px;
    font-weight: 700;
    line-height: 50px;
  }

  .updated {
    padding: 21px 20px 0;
    line-height: 20px;
    color: #666;
  }

  .card-head {
    display: flex;
    align-items: center;
    justify-content: space-between;
    height: 40px;
    padding: 8px 20px 0;
    box-sizing: border-box;
  }

  h2 {
    font-size: 19px;
    line-height: 28px;
  }

  .chart,
  .bars {
    display: block;
    width: 100%;
    fill: #000;
  }

  text {
    font-size: 11px;
    fill: #000;
  }

  .pie-row {
    display: flex;
    padding: 95px 0 0 22px;
  }

  .pie {
    width: 222px;
    height: 222px;
  }

  .pie-name {
    padding: 74px 0 0 48px;
    color: #1b3f52;
    font-size: 14px;
    font-weight: 700;
  }

  .tabs {
    display: flex;
    justify-content: flex-end;
    height: 44px;
    padding-right: 217px;
  }

  .tabs button {
    display: flex;
    align-items: center;
    gap: 6px;
    height: 54px;
    font-size: 15px;
    color: #8c8c8c;
  }

  .tabs .icon {
    width: 18px;
    height: 18px;
    color: #555;
    stroke-width: 2;
  }

  .bars-row {
    display: flex;
    align-items: flex-start;
    gap: 8px;
    padding-right: 16px;
  }

  .bars {
    flex: 1;
    min-width: 0;
  }

  .legend {
    width: 90px;
    box-sizing: border-box;
    margin-top: 43px;
    padding: 3px 4px 4px 6px;
    border: 1px solid #c8c8c8;
    border-radius: 3px;
    color: #000;
    font-size: 12px;
  }

  .legend li {
    display: flex;
    align-items: center;
    gap: 4px;
    height: 16px;
  }

  .legend i {
    width: 13px;
    height: 13px;
  }

  .share {
    flex: 1;
    text-align: right;
    white-space: nowrap;
  }

  .notices {
    flex: none;
    width: 232px;
    padding: 10px 8px;
    gap: 8px;
  }

  h3 {
    display: flex;
    align-items: center;
    justify-content: center;
    gap: 3px;
    height: 30px;
    margin-bottom: 10px;
    padding-right: 8px;
    font-size: 17px;
    font-weight: 700;
  }

  .notice {
    display: flex;
    align-items: center;
    gap: 8px;
    height: 50px;
    padding-left: 8px;
    border-radius: 8px;
    background: #dbebec;
    font-size: 11px;
  }

  .notice .icon {
    width: 26px;
    height: 26px;
    color: #f0001c;
  }

  .scrim {
    position: absolute;
    inset: 0;
    background: rgba(0, 0, 0, 0.59);
  }

  .dialog {
    position: absolute;
    top: 279px;
    left: 572px;
    width: 738px;
    border-radius: 8px;
    overflow: hidden;
    background: #fff;
    box-shadow: 0 12px 40px rgba(0, 0, 0, 0.6);
    color: #002b52;
    font-family: "Liberation Sans", Arial, sans-serif;
  }

  .dialog-bar {
    display: flex;
    align-items: center;
    gap: 6px;
    height: 30px;
    padding-left: 8px;
    color: #000;
    font-family: "Open Sans", "Noto Sans", sans-serif;
    font-size: 11px;
    background: linear-gradient(90deg, #ebf6f1, #eef4f5);
  }

  .dialog-body {
    display: flex;
  }

  .rail {
    display: flex;
    align-items: center;
    justify-content: center;
    flex: none;
    width: 40px;
    padding-bottom: 16px;
    box-sizing: border-box;
    background: linear-gradient(90deg, transparent 21px, #000 21px 22px, transparent 22px 29px, #000 29px 30px, transparent 30px);
  }

  .rail span {
    color: #1f6099;
    font: 900 20px/20px Lato, sans-serif;
    letter-spacing: 5px;
    writing-mode: vertical-rl;
    transform: rotate(180deg);
  }

  .pane {
    flex: 1;
    min-width: 0;
    padding: 23px 17px 12px 0;
  }

  .filters {
    display: flex;
    justify-content: space-between;
    padding: 0 16px 15px 20px;
  }

  .plain {
    display: grid;
    grid-template-columns: 173px 202px;
    gap: 11px 19px;
    align-content: start;
    padding-top: 3px;
  }

  .dates {
    display: flex;
    justify-content: space-between;
  }

  .dates .field {
    width: 96px;
  }

  .field label {
    display: block;
    line-height: 16px;
  }

  .box,
  select {
    display: block;
    width: 100%;
    height: 23px;
    border: 1px solid #646464;
    background: #fff;
  }

  select {
    height: 22px;
    padding: 0 3px;
    border-color: #8a8a8a;
    border-radius: 1px;
    color: #000;
    font-size: 11px;
    appearance: none;
    background: #fff
      url("data:image/svg+xml,%3Csvg xmlns='http://www.w3.org/2000/svg' width='9' height='6'%3E%3Cpath d='M.5.5l4 4 4-4' fill='none' stroke='%23555'/%3E%3C/svg%3E")
      no-repeat right 4px center;
  }

  .date {
    display: flex;
    box-sizing: border-box;
    height: 23px;
    border: 1px solid #e8e8e8;
    border-bottom-color: #777;
    background: #fff;
  }

  .date input {
    flex: 1;
    min-width: 0;
    padding: 0 0 0 2px;
    border: 0;
    background: none;
    color: #000;
    white-space: pre;
  }

  .calendar {
    display: flex;
    align-items: center;
    justify-content: center;
    width: 20px;
    height: 20px;
    box-sizing: border-box;
    border-right: 2px solid #808080;
    border-bottom: 2px solid #808080;
    background: #f0f0f0;
  }

  .calendar span {
    box-sizing: border-box;
    border: solid #000060;
    border-width: 1px 2px 1px 0;
    background: #fff;
    color: #000;
    font: bold 9px/9px "Liberation Sans", sans-serif;
    text-align: center;
  }

  .group {
    display: grid;
    grid-template-columns: 106px 100px;
    gap: 11px;
    padding: 3px 9px 6px 7px;
    border-radius: 12px;
    background: #e0e8f1;
  }

  .order {
    padding-left: 33px;
  }

  .order label,
  .order-date label {
    color: #2a6ba8;
  }

  table {
    width: 100%;
    table-layout: fixed;
    border-collapse: separate;
    border-spacing: 0;
    border: 1px solid #696969;
    border-bottom-width: 2px;
  }

  .c-tipo {
    width: 75px;
  }

  .c-ordine {
    width: 84px;
  }

  .c-doc {
    width: 144px;
  }

  .c-data {
    width: 95px;
  }

  .c-tot {
    width: 92px;
  }

  th {
    height: 19px;
    padding: 0;
    border: solid #696969;
    border-width: 0 1px 1px 0;
    box-shadow: inset 1px 1px #fff, inset -1px -1px #c0c0c0;
    background: #002b4d;
    color: #fff;
    font-weight: 400;
    font-size: 12px;
    white-space: nowrap;
  }

  th.left {
    padding-left: 2px;
    text-align: left;
  }

  tbody td {
    height: 316px;
    border-bottom: 1px solid #696969;
  }

  tfoot td {
    height: 19px;
    padding: 0;
    border: 1px solid #002b4d;
    border-top-color: #fff;
    border-bottom-color: #c0c0c0;
    background: #002b4d;
    color: #fff;
  }

  tfoot .sum {
    padding-right: 3px;
    border-color: #c8d2da;
    text-align: right;
    font-family: "DejaVu Sans", sans-serif;
  }

  .actions {
    display: flex;
    justify-content: space-between;
    padding-top: 8px;
  }

  .action {
    display: flex;
    align-items: center;
    justify-content: center;
    gap: 4px;
    box-sizing: border-box;
    width: 104px;
    height: 34px;
    border: 1px solid #002b52;
    background: #f5f7fa;
    font: 12px/14px "DejaVu Sans", sans-serif;
    text-align: center;
  }

  .action svg {
    width: 16px;
    height: 16px;
    fill: none;
  }

  .action.duplicate {
    justify-content: flex-start;
    gap: 12px;
    width: 86px;
    padding-left: 3px;
    margin: 0 12px 0 4px;
  }

  .action.off {
    border-color: #8a8a8a;
    background: #bfbfbf;
    color: #8b8b8b;
  }

  .action.find {
    border-color: #eef3f8;
    background: #aec4da;
    color: #eef3f8;
  }

  .action.cancel {
    margin-left: 20px;
  }
</style>
